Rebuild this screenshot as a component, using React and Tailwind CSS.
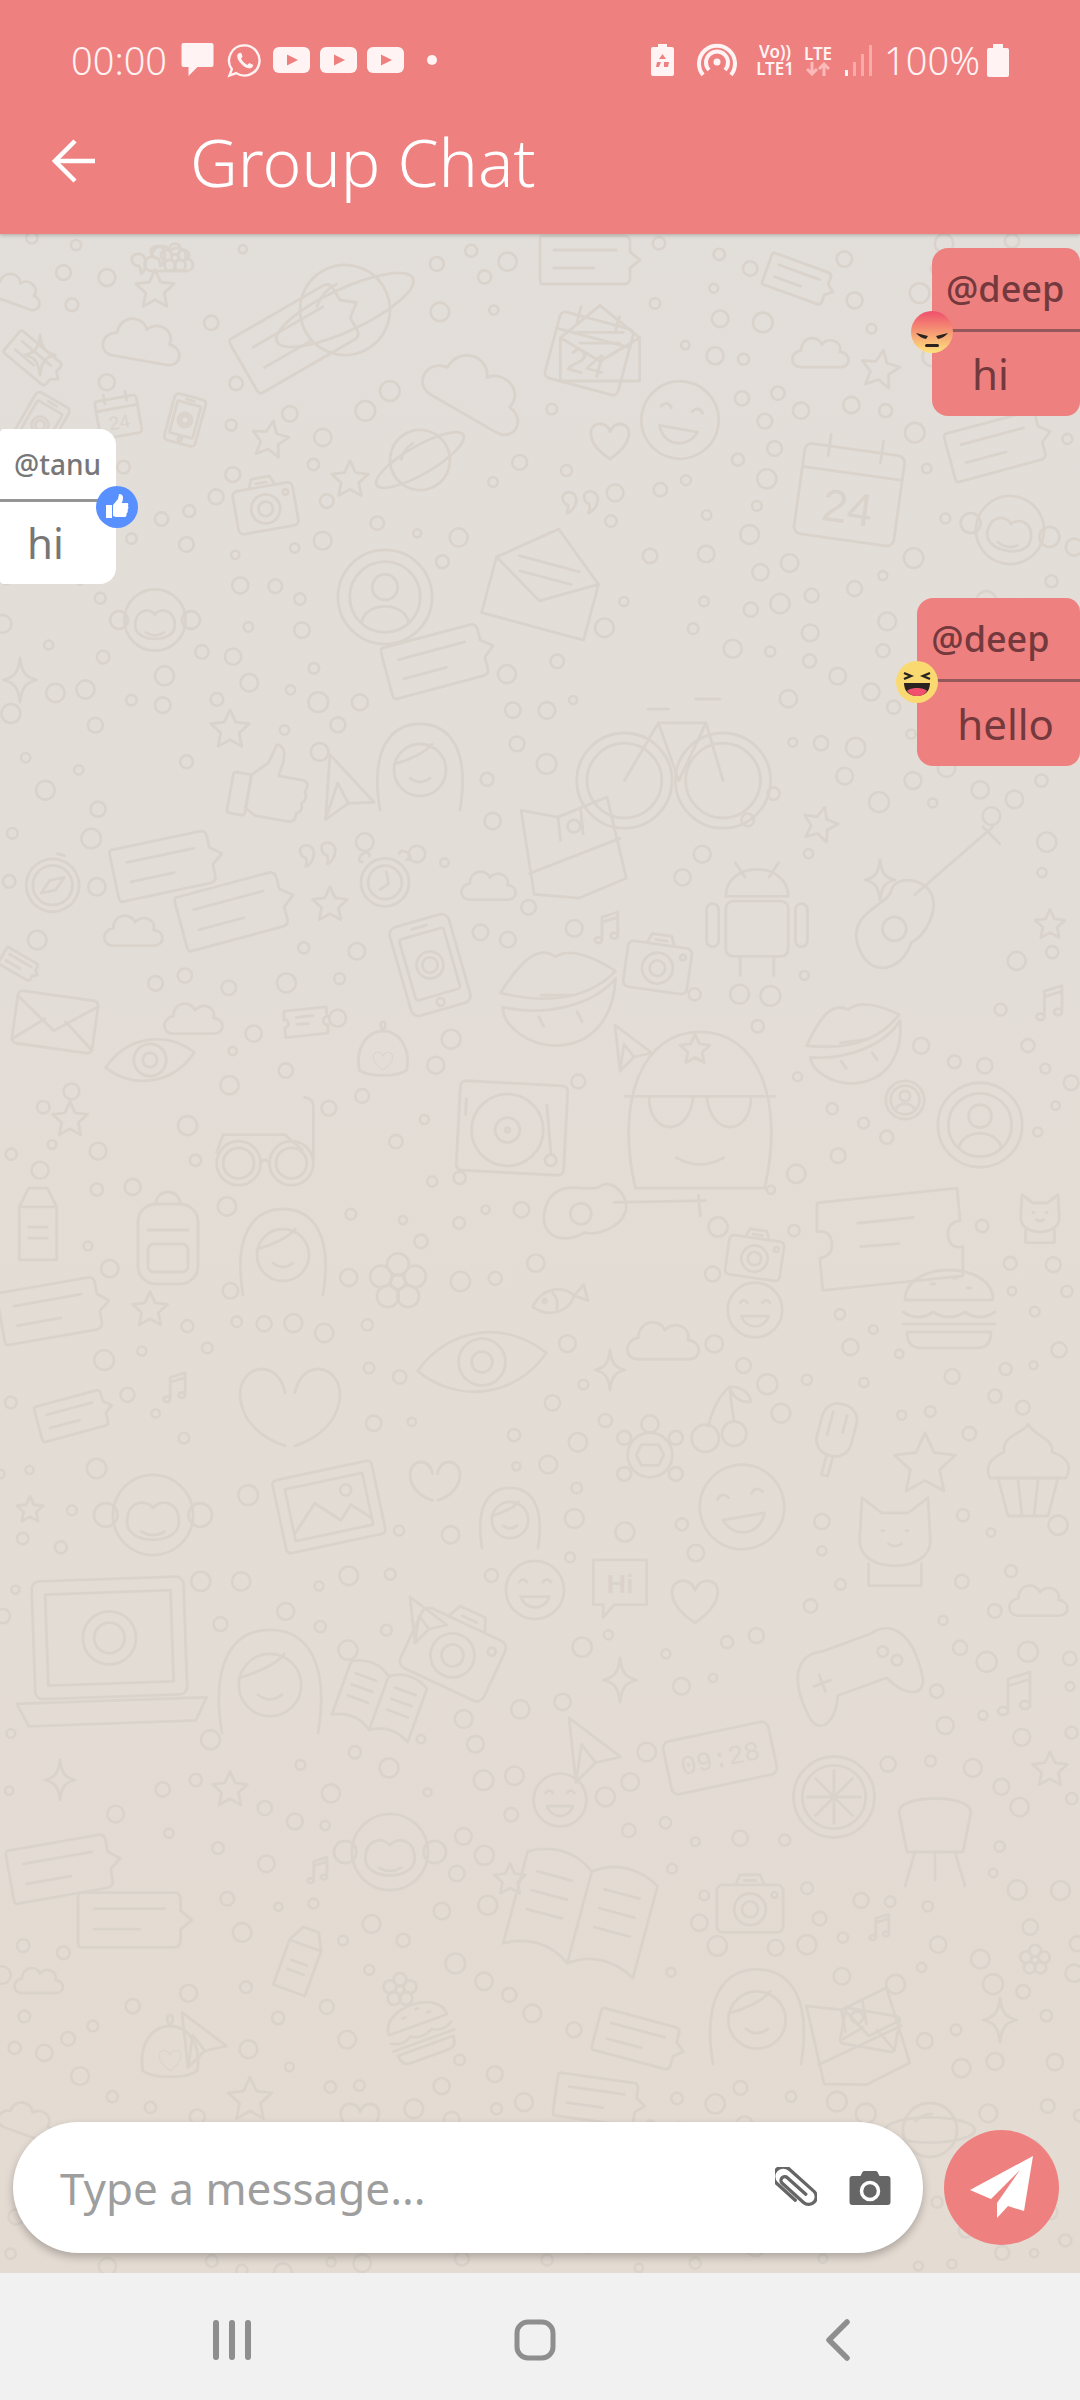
import React from 'react';

// wallpaper glyphs, drawn in a -50..50 box
const star = (n = 5, r1 = 46, r2 = 22) => {
  const pts = [];
  for (let i = 0; i < n * 2; i++) {
    const r = i % 2 ? r2 : r1;
    const a = (Math.PI * i) / n - Math.PI / 2;
    pts.push(`${(r * Math.cos(a)).toFixed(1)},${(r * Math.sin(a)).toFixed(1)}`);
  }
  return <polygon points={pts.join(' ')} />;
};

const heartPath = 'M0 38 C-52 4 -44 -34 -18 -32 C-8 -31 -2 -24 0 -16 C3 -25 10 -32 20 -32 C44 -32 50 4 0 38Z';

const glyphs = {
  star: star(),
  heart: <path d={heartPath} />,
  cloud: <path d="M-36 26 C-56 26 -56 0 -36 -3 C-36 -26 -8 -31 0 -13 C10 -27 36 -19 31 0 C51 2 50 26 32 26 Z" />,
  sparkle: <path d="M0 -50 C4 -15 15 -5 38 0 C15 5 4 15 0 50 C-4 15 -15 5 -38 0 C-15 -5 -4 -15 0 -50Z" />,
  quote: <path d="M-42 -12 C-42 -28 -12 -30 -10 -8 C-9 10 -20 22 -26 24 C-24 12 -24 8 -28 4 C-36 4 -42 -4 -42 -12Z M6 -24 C6 -38 36 -40 38 -18 C39 0 28 12 22 14 C24 2 24 -2 20 -6 C12 -6 6 -14 6 -24Z" />,
  note: <path d="M-24 34 a10 8 0 1 0 .1 0 M-14 40 L-14 -22 L30 -36 L30 26 M-14 -8 L30 -22 M20 22 a10 8 0 1 0 .1 0" />,
  card: <g><path d="M-48 -24 L34 -24 Q40 -24 40 -18 L40 -8 L50 0 L40 8 L40 18 Q40 24 34 24 L-48 24 Q-50 24 -50 18 L-50 -18 Q-50 -24 -48 -24Z" /><path d="M-36 -10 H26 M-36 8 H4" /></g>,
  envelope: <g><rect x="-46" y="-30" width="92" height="60" rx="6" /><path d="M-46 -24 L0 10 L46 -24 M-46 26 L-12 -2 M46 26 L12 -2" /></g>,
  letter: <g><path d="M-44 -8 L0 -44 L44 -8 L44 40 L-44 40Z" /><path d="M-44 -8 L0 18 L44 -8 M-26 -14 L26 -14 M-22 -2 L22 -2" /></g>,
  phone: <g><rect x="-32" y="-48" width="64" height="96" rx="8" /><rect x="-24" y="-34" width="48" height="66" rx="3" /><circle cx="0" cy="0" r="14" /><circle cx="0" cy="0" r="8" /><circle cx="0" cy="40" r="4" /><path d="M-8 -41 H8" /></g>,
  camera: <g><rect x="-46" y="-28" width="92" height="66" rx="8" /><path d="M-20 -28 L-14 -42 H14 L20 -28 M-8 -34 H8" /><circle cx="0" cy="6" r="22" /><circle cx="0" cy="6" r="11" /><circle cx="34" cy="-14" r="4" /></g>,
  clock: <g><circle cx="0" cy="4" r="40" /><circle cx="0" cy="4" r="28" /><path d="M2 -14 L6 6 L-8 16" /><path d="M-38 -30 a10 6 -40 1 1 12 -10 M24 -44 a10 6 30 1 1 12 10" /></g>,
  plane: <g><path d="M-30 -46 L44 10 L8 18 L-20 46Z" /><path d="M8 18 L-12 -8 L-20 46" /></g>,
  user: <g><circle cx="0" cy="0" r="48" /><circle cx="0" cy="0" r="36" /><circle cx="0" cy="-10" r="13" /><path d="M-24 26 C-20 4 20 4 24 26" /></g>,
  face: <g><circle cx="0" cy="0" r="44" /><path d="M-24 -12 q6 -8 12 0 M12 -12 q6 -8 12 0 M-22 10 C-14 32 14 32 22 10Z" /></g>,
  burger: <g><path d="M-44 -8 C-44 -48 44 -48 44 -8Z" /><path d="M-46 4 Q-30 14 -16 4 Q0 14 16 4 Q30 14 46 4 M-46 16 H46" /><path d="M-42 24 H42 Q42 40 28 40 H-28 Q-42 40 -42 24Z" /><path d="M-18 -24 h4 M4 -30 h4 M18 -20 h4" /></g>,
  cupcake: <g><path d="M-30 8 L-20 46 H20 L30 8Z M-10 10 L-6 46 M10 10 L6 46" /><path d="M-38 8 C-46 -8 -28 -16 -24 -18 C-26 -36 -4 -36 0 -46 C6 -34 26 -32 24 -18 C36 -14 46 -6 38 8Z" /></g>,
  laptop: <g><rect x="-40" y="-40" width="80" height="62" rx="4" /><rect x="-33" y="-33" width="66" height="48" /><path d="M-50 24 H50 L44 36 H-44Z" /><circle cx="0" cy="-9" r="14" /><circle cx="0" cy="-9" r="8" /></g>,
  book: <g><path d="M0 -30 C-16 -42 -34 -40 -48 -32 L-48 36 C-34 28 -16 26 0 38 C16 26 34 28 48 36 L48 -32 C34 -40 16 -42 0 -30Z M0 -30 V38" /><path d="M-38 -20 L-12 -20 M-38 -6 L-12 -6 M-38 8 L-12 8 M12 -20 L38 -20 M12 -6 L38 -6 M12 8 L38 8" /></g>,
  flower: <g><circle cx="0" cy="0" r="11" /><circle cx="0" cy="-26" r="16" /><circle cx="25" cy="-8" r="16" /><circle cx="15" cy="21" r="16" /><circle cx="-15" cy="21" r="16" /><circle cx="-25" cy="-8" r="16" /></g>,
  planet: <g><circle cx="0" cy="0" r="30" /><ellipse cx="0" cy="0" rx="50" ry="14" /><path d="M-16 -10 q8 -8 18 -8" /></g>,
  bike: <g><circle cx="-28" cy="18" r="22" /><circle cx="-28" cy="18" r="28" /><circle cx="30" cy="18" r="22" /><circle cx="30" cy="18" r="28" /><path d="M-28 18 L-8 -16 L20 -16 L30 18 M-8 -16 L4 18 L20 -16 M-14 -24 H-2 M14 -30 H28" /></g>,
  turntable: <g><rect x="-48" y="-40" width="96" height="80" rx="5" /><circle cx="-4" cy="2" r="32" /><circle cx="-4" cy="2" r="11" /><circle cx="-4" cy="2" r="2" /><path d="M30 -22 L36 22 M36 22 a5 5 0 1 0 .1 0 M-42 -24 L-42 -10" /></g>,
  lips: <g><path d="M-48 -6 C-30 -34 -16 -46 -2 -36 C10 -44 30 -36 48 -24 C30 -6 0 6 -48 -6Z" /><path d="M-46 6 C-10 14 30 4 48 -18 C46 20 24 38 -2 38 C-24 38 -46 22 -46 6Z" /><path d="M-14 -4 H14 M-16 14 l4 8 M16 10 l4 8" /></g>,
  glasses: <g><circle cx="-24" cy="12" r="20" /><circle cx="-24" cy="12" r="14" /><circle cx="24" cy="12" r="20" /><circle cx="24" cy="12" r="14" /><path d="M-4 12 Q0 6 4 12 M-44 2 L-38 -14 H18 L34 0 M44 8 V-40 Q44 -46 36 -48" /></g>,
  icecream: <g><rect x="-22" y="-46" width="44" height="66" rx="20" /><path d="M-4 20 V46 H4 V20 M-10 -34 V-4 M8 -34 V-12" /></g>,
  milk: <g><path d="M-24 -22 L-12 -46 H12 L24 -22 V46 H-24Z M-24 -22 H24" /><path d="M-12 4 H12 M-12 18 H12" /></g>,
  backpack: <g><rect x="-30" y="-34" width="60" height="80" rx="18" /><rect x="-20" y="6" width="40" height="28" rx="6" /><path d="M-12 -34 C-12 -50 12 -50 12 -34 M-20 -8 H20" /></g>,
  fish: <g><path d="M-44 0 C-20 -28 14 -22 28 0 C14 22 -20 28 -44 0Z M28 0 L48 -14 V14Z" /><circle cx="-22" cy="-4" r="3" /><path d="M-6 -14 Q2 0 -6 14" /></g>,
  compass: <g><circle cx="0" cy="2" r="40" /><circle cx="0" cy="2" r="30" /><path d="M14 -14 L-6 -4 L-14 18 L6 8Z M-6 -46 H6" /></g>,
  lemon: <g><circle cx="0" cy="0" r="46" /><circle cx="0" cy="0" r="36" /><path d="M-30 0 H30 M0 -30 V30 M-21 -21 L21 21 M21 -21 L-21 21" /></g>,
  chair: <g><path d="M-36 -28 C-36 -46 36 -46 36 -28 L28 12 H-28Z" /><path d="M-20 12 L-30 46 M20 12 L30 46 M0 12 V40" /></g>,
  gamepad: <g><path d="M-46 22 C-52 -20 -34 -28 -20 -24 H20 C34 -28 52 -20 46 22 C42 36 28 30 20 12 H-20 C-28 30 -42 36 -46 22Z" /><path d="M-28 -8 V6 M-35 -1 H-21" /><circle cx="24" cy="-8" r="4" /><circle cx="32" cy="2" r="4" /></g>,
  robot: <g><rect x="-26" y="-14" width="52" height="46" rx="6" /><path d="M-26 -18 C-26 -48 26 -48 26 -18Z M-18 -46 L-10 -34 M18 -46 L10 -34" /><rect x="-42" y="-12" width="10" height="36" rx="5" /><rect x="32" y="-12" width="10" height="36" rx="5" /><path d="M-14 32 V48 M14 32 V48" /></g>,
  map: <g><path d="M-42 -42 L-8 -32 L40 -46 L50 32 L4 46 L-38 38Z" /><path d="M-40 18 L48 -6 M-8 -32 V-10 M14 -38 V-14" /><circle cx="6" cy="-22" r="6" /></g>,
  monkey: <g><circle cx="0" cy="0" r="34" /><circle cx="-40" cy="0" r="10" /><circle cx="40" cy="0" r="10" /><path d="M-22 6 C-22 -12 -6 -14 0 -6 C6 -14 22 -12 22 6 C22 26 -22 26 -22 6Z" /><path d="M-10 14 Q0 20 10 14" /></g>,
  calendar: <g><rect x="-42" y="-34" width="84" height="76" rx="6" /><path d="M-42 -14 H42 M-22 -44 V-26 M22 -44 V-26" /><text x="0" y="28" textAnchor="middle" fontSize="38" fontFamily="Liberation Sans, sans-serif" fill="#dad3cc" stroke="none">24</text></g>,
  hi: <g><path d="M-38 -36 H38 V28 H-8 L-24 46 V28 H-38Z" /><text x="0" y="12" textAnchor="middle" fontSize="38" fontWeight="700" fontFamily="Liberation Sans, sans-serif" fill="#dad3cc" stroke="none">Hi</text></g>,
  digital: <g><rect x="-48" y="-24" width="96" height="48" rx="6" /><text x="0" y="8" textAnchor="middle" fontSize="24" fontFamily="Liberation Mono, monospace" fill="#dad3cc" stroke="none">09:28</text></g>,
  guitar: <g><path d="M-40 22 C-44 4 -22 0 -20 -8 C-18 -18 0 -16 4 -6 C8 4 0 18 -8 22 C-14 40 -34 44 -40 22Z" /><path d="M-6 -6 L40 -46 M34 -46 L44 -36" /><circle cx="-18" cy="14" r="7" /></g>,
  eye: <g><path d="M-50 0 C-22 -30 22 -30 50 0 C22 30 -22 30 -50 0Z" /><circle cx="0" cy="0" r="18" /><circle cx="0" cy="0" r="8" /></g>,
  photo: <g><rect x="-46" y="-34" width="92" height="68" rx="4" /><rect x="-36" y="-24" width="72" height="48" /><path d="M-36 18 L-12 -6 L8 14 L20 2 L36 18" /><circle cx="18" cy="-12" r="5" /></g>,
  turtle: <g><circle cx="0" cy="0" r="26" /><path d="M-10 -12 H10 L16 0 L10 12 H-10 L-16 0Z" /><circle cx="0" cy="-36" r="10" /><circle cx="-30" cy="-20" r="8" /><circle cx="30" cy="-20" r="8" /><circle cx="-30" cy="22" r="8" /><circle cx="30" cy="22" r="8" /></g>,
  cherry: <g><circle cx="-18" cy="24" r="18" /><circle cx="20" cy="18" r="16" /><path d="M-14 8 Q-6 -26 14 -44 Q16 -20 20 2 M14 -44 C30 -44 40 -36 42 -24 C28 -22 18 -30 14 -44" /></g>,
  cat: <g><path d="M-30 -34 L-12 -20 H12 L30 -34 L32 2 C34 22 14 28 0 28 C-14 28 -34 22 -32 2Z" /><path d="M-24 26 V46 H24 V26 M-12 -4 h2 M10 -4 h2 M-6 8 Q0 12 6 8" /></g>,
  girl: <g><path d="M-40 40 C-50 -20 -30 -46 0 -46 C30 -46 50 -20 40 40" /><circle cx="0" cy="0" r="26" /><path d="M-10 8 Q0 16 10 8 M-26 -6 C-10 -10 6 -18 12 -26" /></g>,
  hands: <g><path d="M-4 34 C-50 20 -50 -28 -24 -30 C-12 -30 -6 -20 -4 -10 M4 34 C50 20 50 -28 24 -30 C12 -30 6 -20 4 -10" /></g>,
  thumb: <g><path d="M-20 -8 L-4 -24 L2 -46 Q14 -46 12 -26 L10 -12 L38 -12 Q46 -10 42 0 Q46 8 40 14 Q44 22 36 26 Q38 36 28 36 L-8 36 L-20 30Z" /><rect x="-40" y="-8" width="20" height="46" rx="3" /></g>,
  shades: <g><path d="M-38 46 C-50 -6 -34 -46 0 -46 C34 -46 50 -6 38 46Z" /><path d="M-44 -8 H44 M-30 -8 C-30 16 -6 16 -4 -8 M4 -8 C6 16 30 16 30 -8" /><path d="M-14 28 Q0 36 14 28" /></g>,
  scoop: <g><path d="M-34 26 C-40 -10 -20 -30 0 -30 C20 -30 40 -10 34 26 C20 36 -20 36 -34 26Z" /><path d="M0 -30 C-12 -48 12 -48 0 -30" /><path d={heartPath} transform="translate(0 12) scale(.36)" /></g>,
  ticket: <g><path d="M-48 -20 L48 -30 L50 -8 Q40 -6 42 4 Q44 12 52 10 L52 30 L-44 40 L-46 18 Q-36 16 -38 6 Q-40 -2 -48 0Z" /><path d="M-20 -6 L18 -10 M-18 10 L8 8" /></g>,
};

const big = [
  ['cloud', 18, 290, 55, 20], ['quote', 150, 262, 42, -10], ['sparkle', 40, 355, 40, 0], ['card', 35, 360, 60, 40], ['cloud', 145, 340, 80, 10],
  ['star', 155, 290, 44, 0], ['cloud', 170, 258, 50, 0], ['flower', 175, 258, 34, 0], ['phone', 40, 425, 60, 30], ['calendar', 118, 415, 50, -10],
  ['planet', 345, 310, 150, -25], ['card', 300, 335, 130, -30], ['cloud', 480, 390, 110, 30], ['letter', 600, 345, 90, 0], ['card', 590, 260, 100, 0],
  ['calendar', 590, 350, 90, 15], ['face', 680, 420, 88, 10], ['heart', 610, 440, 50, 0], ['quote', 580, 505, 44, 10], ['card', 800, 280, 70, 20],
  ['cloud', 822, 352, 58, 0], ['card', 1000, 445, 104, -15], ['calendar', 850, 490, 120, 8], ['monkey', 1010, 530, 100, 10], ['star', 880, 370, 44, 10],
  ['star', 270, 440, 42, 10], ['planet', 420, 460, 100, -30], ['camera', 265, 505, 66, -10], ['phone', 185, 420, 50, 15], ['star', 350, 480, 42, 0],
  ['letter', 545, 580, 120, 15], ['user', 385, 597, 98, 0], ['monkey', 155, 620, 90, 0], ['card', 440, 660, 110, -15], ['sparkle', 20, 680, 44, 0],
  ['bike', 672, 750, 170, 0], ['thumb', 268, 785, 90, 10], ['guitar', 925, 905, 170, 0], ['plane', 345, 790, 70, 10], ['star', 230, 730, 44, 0],
  ['girl', 420, 770, 100, 0], ['robot', 757, 918, 120, 0], ['compass', 53, 884, 66, 15], ['card', 168, 865, 110, -12],
  ['card', 237, 910, 116, -15], ['star', 330, 905, 40, 0], ['cloud', 135, 930, 60, 0], ['star', 820, 825, 40, 15], ['sparkle', 880, 880, 40, 0],
  ['phone', 430, 965, 96, -16], ['lips', 558, 1000, 120, 0], ['camera', 658, 964, 70, 8], ['note', 607, 925, 36, 0], ['cloud', 490, 885, 56, 0],
  ['map', 570, 850, 106, -6], ['clock', 385, 880, 60, 0], ['quote', 318, 857, 44, 5], ['star', 1050, 925, 34, 0],
  ['note', 1050, 1000, 40, 0], ['envelope', 55, 1022, 88, 8], ['card', 20, 965, 40, 30], ['plane', 630, 1048, 50, 0], ['cloud', 195, 1018, 60, 0],
  ['scoop', 383, 1052, 70, 0], ['ticket', 305, 1020, 44, 0], ['turntable', 512, 1128, 112, 3], ['shades', 700, 1110, 170, 0], ['glasses', 265, 1150, 110, 0],
  ['eye', 150, 1060, 90, -10], ['star', 695, 1050, 34, 0], ['user', 980, 1125, 88, 0], ['lips', 855, 1045, 100, -8],
  ['milk', 38, 1224, 78, 0], ['backpack', 168, 1238, 100, 0], ['girl', 283, 1255, 100, 0], ['flower', 398, 1282, 68, 0], ['fish', 558, 1300, 60, -15],
  ['burger', 949, 1308, 100, 0], ['ticket', 887, 1232, 146, 0], ['user', 905, 1100, 40, 0], ['cat', 1040, 1215, 60, 0], ['star', 70, 1120, 40, 0],
  ['guitar', 615, 1215, 150, 40], ['face', 755, 1310, 62, 0], ['camera', 755, 1255, 60, 8], ['eye', 482, 1362, 130, -8], ['cloud', 665, 1340, 74, 0],
  ['card', 55, 1310, 110, -10], ['star', 150, 1310, 40, 0], ['note', 175, 1385, 34, 0], ['sparkle', 610, 1370, 40, 0],
  ['hands', 290, 1405, 120, 0], ['card', 75, 1415, 76, -15], ['cherry', 719, 1420, 76, 0], ['turtle', 650, 1455, 86, 0], ['icecream', 834, 1440, 80, 15],
  ['cupcake', 1028, 1470, 100, 0], ['star', 925, 1465, 70, 0], ['photo', 329, 1507, 110, -12], ['hands', 435, 1480, 60, 0], ['monkey', 153, 1515, 118, 0],
  ['face', 742, 1507, 96, -10], ['cat', 895, 1535, 110, 0], ['girl', 510, 1520, 70, 0], ['star', 30, 1510, 30, 0], ['cloud', 1040, 1600, 60, 0],
  ['laptop', 110, 1655, 190, -2], ['girl', 270, 1685, 120, 0], ['hi', 620, 1585, 70, 0], ['heart', 695, 1600, 60, 0], ['sparkle', 620, 1680, 44, 0],
  ['gamepad', 857, 1672, 130, -20], ['camera', 455, 1650, 100, 25], ['book', 380, 1700, 84, 20], ['face', 535, 1590, 66, 0], ['plane', 425, 1620, 50, 0],
  ['plane', 590, 1750, 70, 0], ['digital', 720, 1758, 112, -12], ['lemon', 834, 1797, 88, 0], ['note', 1015, 1690, 50, 0], ['star', 1050, 1770, 40, 0],
  ['chair', 935, 1840, 100, 0], ['card', 65, 1868, 112, -10], ['card', 135, 1920, 114, 0], ['monkey', 390, 1852, 112, 0], ['sparkle', 60, 1780, 40, 0],
  ['star', 230, 1790, 40, 0], ['face', 560, 1800, 60, 0], ['book', 581, 1912, 140, 15], ['camera', 750, 1905, 72, 0], ['note', 318, 1868, 30, 0],
  ['milk', 300, 1960, 70, 20], ['star', 510, 1880, 36, 0], ['flower', 400, 1990, 40, 0], ['plane', 200, 2040, 60, 0], ['girl', 757, 2020, 110, 0],
  ['card', 640, 2040, 90, 15], ['cloud', 40, 1980, 50, 0], ['planet', 930, 2130, 90, 0], ['scoop', 170, 2050, 80, 0], ['sparkle', 1000, 2020, 44, 0],
  ['flower', 1035, 1960, 36, 0], ['burger', 420, 2030, 70, -20], ['note', 880, 1925, 30, 0], ['map', 855, 2040, 100, -10], ['compass', 720, 2150, 50, 0],
  ['card', 600, 2100, 90, 8], ['envelope', 870, 2030, 60, 10], ['heart', 360, 2120, 50, 0], ['cloud', 30, 2120, 60, 20], ['star', 250, 2100, 50, 0],
];

// little rings scattered between the big shapes
const scatter = () => {
  let seed = 1187;
  const rnd = () => {
    seed = (seed * 16807) % 2147483647;
    return seed / 2147483647;
  };
  const out = [];
  for (let i = 0; i < 3000 && out.length < 620; i++) {
    const x = rnd() * 1080;
    const y = 234 + rnd() * 2040;
    const clear = big.every((b) => Math.hypot(b[1] - x, b[2] - y) > b[3] * 0.56 + 6);
    const far = out.every((o) => Math.hypot(o[0] - x, o[1] - y) > 27);
    if (clear && far) out.push([x, y, 4 + rnd() * 6]);
  }
  return out;
};
const dots = scatter();

const Wallpaper = () => (
  <svg className="absolute inset-0 w-full h-full" viewBox="0 234 1080 2039" preserveAspectRatio="none" fill="none" stroke="#dad3cc" strokeLinejoin="round" strokeLinecap="round">
    {dots.map((d, i) => (
      <circle key={i} cx={d[0]} cy={d[1]} r={d[2]} strokeWidth="2.6" />
    ))}
    {big.map(([name, x, y, s, rot], i) => (
      <g key={i} transform={`translate(${x} ${y}) rotate(${rot}) scale(${s / 100})`} strokeWidth={(2.8 * 100) / s}>
        {glyphs[name]}
      </g>
    ))}
  </svg>
);

const YouTube = () => (
  <svg width="37" height="26" viewBox="0 0 37 26">
    <rect width="37" height="26" rx="6" fill="#fff3f3" />
    <path d="M14 7.5 L25 13 L14 18.5Z" fill="#ef8080" />
  </svg>
);

const StatusBar = () => (
  <div className="h-[120px] flex items-center justify-between pl-[71px] pr-[71px] text-[#fff3f3]">
    <div className="flex items-center">
      <span className="text-[38px] leading-none font-light w-[93px]">00:00</span>
      <svg className="ml-[17px]" width="33" height="34" viewBox="0 0 32 34">
        <path d="M2 0 H30 Q32 0 32 2 V22 Q32 24 30 24 H16 L7 33 V24 H2 Q0 24 0 22 V2 Q0 0 2 0Z" fill="#fff3f3" />
      </svg>
      <svg className="ml-[13px]" width="35" height="35" viewBox="0 0 36 36" fill="none" stroke="#fff3f3" strokeWidth="2.4">
        <path d="M18 2.5 A15.5 15.5 0 1 1 9.5 31 L2.5 33.5 L5 27 A15.5 15.5 0 0 1 18 2.5Z" />
        <path d="M12 10.5 C10 12 10 15 12 18 C14.5 22 18.5 25.5 22.5 26 C25 26 27 24.5 27 22.5 L23 20.5 L21 22.5 C18.5 21.5 15.5 18.5 14.5 16 L16 14 L14.5 10 Z" fill="#fff3f3" stroke="none" />
      </svg>
      <div className="flex gap-[10px] ml-[11px]">
        <YouTube />
        <YouTube />
        <YouTube />
      </div>
      <div className="w-[10px] h-[10px] rounded-full bg-[#fff3f3] ml-[23px]" />
    </div>
    <div className="flex items-center">
      <svg width="23" height="32" viewBox="0 0 23 32">
        <path d="M7 0 H16 V3 H21 Q23 3 23 5 V30 Q23 32 21 32 H2 Q0 32 0 30 V5 Q0 3 2 3 H7Z" fill="#fff3f3" />
        <path d="M11.5 10 L15 15 H8Z M6 18 H10 L8 23 H5Z M13 18 H18 L17 23 H13Z" fill="#ef8080" />
      </svg>
      <svg className="ml-[23px]" width="40" height="34" viewBox="0 0 40 34" fill="none" stroke="#fff3f3" strokeWidth="4">
        <circle cx="20" cy="19" r="3.5" fill="#fff3f3" stroke="none" />
        <path d="M12 27 A11 11 0 1 1 28 27" />
        <path d="M6 32 A18 18 0 1 1 34 32" />
      </svg>
      <div className="ml-[18px] w-[40px] text-center text-[17px] leading-[17px] font-semibold">
        Vo))
        <br />
        LTE1
      </div>
      <div className="ml-[7px] w-[32px] flex flex-col items-center text-[17px] leading-[17px] font-semibold">
        <span>LTE</span>
        <svg width="24" height="14" viewBox="0 0 24 14" fill="none" stroke="#fbb9b9" strokeWidth="3">
          <path d="M6 0 V12 M1 7 L6 12 L11 7" />
          <path d="M18 14 V2 M13 7 L18 2 L23 7" />
        </svg>
      </div>
      <svg className="ml-[11px]" width="28" height="31" viewBox="0 0 28 31">
        <rect x="0" y="25" width="3" height="6" fill="#fff3f3" />
        <rect x="8" y="17" width="3" height="14" fill="#f9aaaa" />
        <rect x="16" y="9" width="3" height="22" fill="#f9aaaa" />
        <rect x="24" y="0" width="3" height="31" fill="#f9aaaa" />
      </svg>
      <span className="ml-[11px] text-[38px] leading-none font-light">100%</span>
      <svg className="ml-[7px]" width="22" height="33" viewBox="0 0 22 33">
        <path d="M6 0 H16 V4 H20 Q22 4 22 6 V31 Q22 33 20 33 H2 Q0 33 0 31 V6 Q0 4 2 4 H6Z" fill="#fff3f3" />
      </svg>
    </div>
  </div>
);

const AngryEmoji = () => (
  <svg viewBox="0 0 42 42" className="w-full h-full">
    <defs>
      <linearGradient id="angry" x1="0" y1="0" x2="0" y2="1">
        <stop offset="0" stopColor="#ee4f6c" />
        <stop offset="1" stopColor="#fee37c" />
      </linearGradient>
    </defs>
    <circle cx="21" cy="21" r="21" fill="url(#angry)" />
    <path d="M5 22 L17 25 L15 28 Q9 27 5 22Z M37 22 L25 25 L27 28 Q33 27 37 22Z" fill="#2b2320" />
    <rect x="14" y="33" width="14" height="3" rx="1.5" fill="#2b2320" />
  </svg>
);

const HahaEmoji = () => (
  <svg viewBox="0 0 42 42" className="w-full h-full">
    <circle cx="21" cy="21" r="21" fill="#fbd971" />
    <path d="M8 12 L15 15 L8 18" fill="none" stroke="#262220" strokeWidth="2.4" />
    <path d="M34 12 L27 15 L34 18" fill="none" stroke="#262220" strokeWidth="2.4" />
    <path d="M8 22 H34 C34 30 29 35 21 35 C13 35 8 30 8 22Z" fill="#2a2220" />
    <path d="M11 30 C14 26 28 26 31 30 C28 34 25 35 21 35 C17 35 14 34 11 30Z" fill="#f0506e" />
  </svg>
);

const LikeEmoji = () => (
  <svg viewBox="0 0 42 42" className="w-full h-full">
    <circle cx="21" cy="21" r="21" fill="#5890ff" />
    <rect x="10" y="19" width="6" height="13" fill="#fff" />
    <path d="M17 19 L22 13 L23 8 Q27 8 27 12 Q27 15 25.5 17 H31 Q33 17 32 20 Q33 22 31.5 24 Q32.5 26 30.5 27.5 Q31 31 28 31 H20 L17 30Z" fill="#fff" />
  </svg>
);

const RightBubble = ({ text, emoji, className = '' }) => (
  <div className={`relative self-end bg-[#ef8080] rounded-l-[16px] rounded-r-[14px] text-[#73393c] ${className}`}>
    <div className="h-[81px] flex items-center pl-[14px] pr-[14px] text-[36px] font-medium leading-none">@deep</div>
    <div className="h-[3px] bg-[#94585a]" />
    <div className="h-[84px] flex items-center pl-[40px] pr-[26px] text-[42px] leading-none min-w-[148px]">{text}</div>
    <div className="absolute left-[-21px] top-[63px] w-[42px] h-[42px]">{emoji}</div>
  </div>
);

const App = () => (
  <div className="relative w-[1080px] h-[2400px] flex flex-col overflow-hidden bg-[#f1f1f1] font-['Noto_Sans',sans-serif]">
    <header className="relative z-10 h-[234px] bg-[#ef8080] shadow-[0_1px_4px_rgba(0,0,0,0.25)]">
      <StatusBar />
      <div className="flex items-center h-[82px] pl-[52px]">
        <svg width="44" height="44" viewBox="0 0 44 44" fill="none" stroke="#fff" strokeWidth="4.5">
          <path d="M43 22 H4" />
          <path d="M23 2 L3 22 L23 42" />
        </svg>
        <h1 className="ml-[94px] text-[66px] leading-none font-light text-white">Group Chat</h1>
      </div>
    </header>

    <main className="relative flex-1 flex flex-col bg-gradient-to-b from-[#e2ded9] to-[#e4dbd2]">
      <Wallpaper />
      <div className="relative flex-1 flex flex-col pt-[14px]">
        <RightBubble text="hi" emoji={<AngryEmoji />} />

        <div className="relative self-start w-[116px] mt-[13px] bg-white rounded-r-[16px] rounded-l-[4px] text-[#777]">
          <div className="h-[70px] flex items-center pl-[14px] text-[28px] font-medium leading-none">@tanu</div>
          <div className="h-[3px] bg-[#959595]" />
          <div className="h-[82px] flex items-center pl-[27px] text-[42px] leading-none">hi</div>
          <div className="absolute right-[-22px] top-[57px] w-[42px] h-[42px]">
            <LikeEmoji />
          </div>
        </div>

        <RightBubble text="hello" emoji={<HahaEmoji />} className="mt-[14px]" />
      </div>

      <div className="relative flex items-center pl-[13px] pr-[21px] pb-[20px] justify-between">
        <div className="w-[910px] h-[131px] rounded-[66px] bg-white shadow-[0_4px_8px_rgba(0,0,0,0.25)] flex items-center pl-[47px] pr-[32px]">
          <span className="flex-1 text-[44px] leading-none text-[#9e9e9e]">Type a message...</span>
          <svg width="42" height="42" viewBox="0 0 44 44" fill="none" stroke="#666" strokeWidth="3.5" strokeLinecap="round">
            <g transform="rotate(42 22 22)">
              <path d="M30 32 H4 A10 10 0 0 1 4 12 H38 A8 8 0 0 1 38 28 H8 A4 4 0 0 1 8 20 H34" />
            </g>
          </svg>
          <svg className="ml-[32px]" width="42" height="34" viewBox="0 0 41 34">
            <path d="M3 5 H11 L13 1 Q13.5 0 15 0 H26 Q27.5 0 28 1 L30 5 H38 Q41 5 41 8 V31 Q41 34 38 34 H3 Q0 34 0 31 V8 Q0 5 3 5Z" fill="#666" />
            <circle cx="20.5" cy="20" r="8.5" fill="#666" stroke="#fff" strokeWidth="3.5" />
          </svg>
        </div>
        <div className="w-[115px] h-[115px] rounded-full bg-[#ef8080] shrink-0">
          <svg viewBox="0 0 115 115" className="w-full h-full">
            <path d="M89 26 L26 60 L47 69 L76 40 L53 73 L53 88 L64 76 L80 81Z" fill="#fff" />
          </svg>
        </div>
      </div>
    </main>

    <nav className="h-[127px] shrink-0 bg-[#f1f1f1] flex items-center pt-[7px] pl-[213px]">
      <svg width="38" height="40" viewBox="0 0 38 40" fill="none" stroke="#8e8e8e" strokeWidth="6" strokeLinecap="round">
        <path d="M3 3 V37 M19 3 V37 M35 3 V37" />
      </svg>
      <svg className="ml-[263px]" width="42" height="42" viewBox="0 0 42 42" fill="none" stroke="#8e8e8e" strokeWidth="5">
        <rect x="3" y="3" width="36" height="36" rx="11" />
      </svg>
      <svg className="ml-[270px]" width="24" height="42" viewBox="0 0 24 42" fill="none" stroke="#8e8e8e" strokeWidth="5.5" strokeLinecap="round" strokeLinejoin="round">
        <path d="M21 3 L3 21 L21 39" />
      </svg>
    </nav>
  </div>
);

export default App;
